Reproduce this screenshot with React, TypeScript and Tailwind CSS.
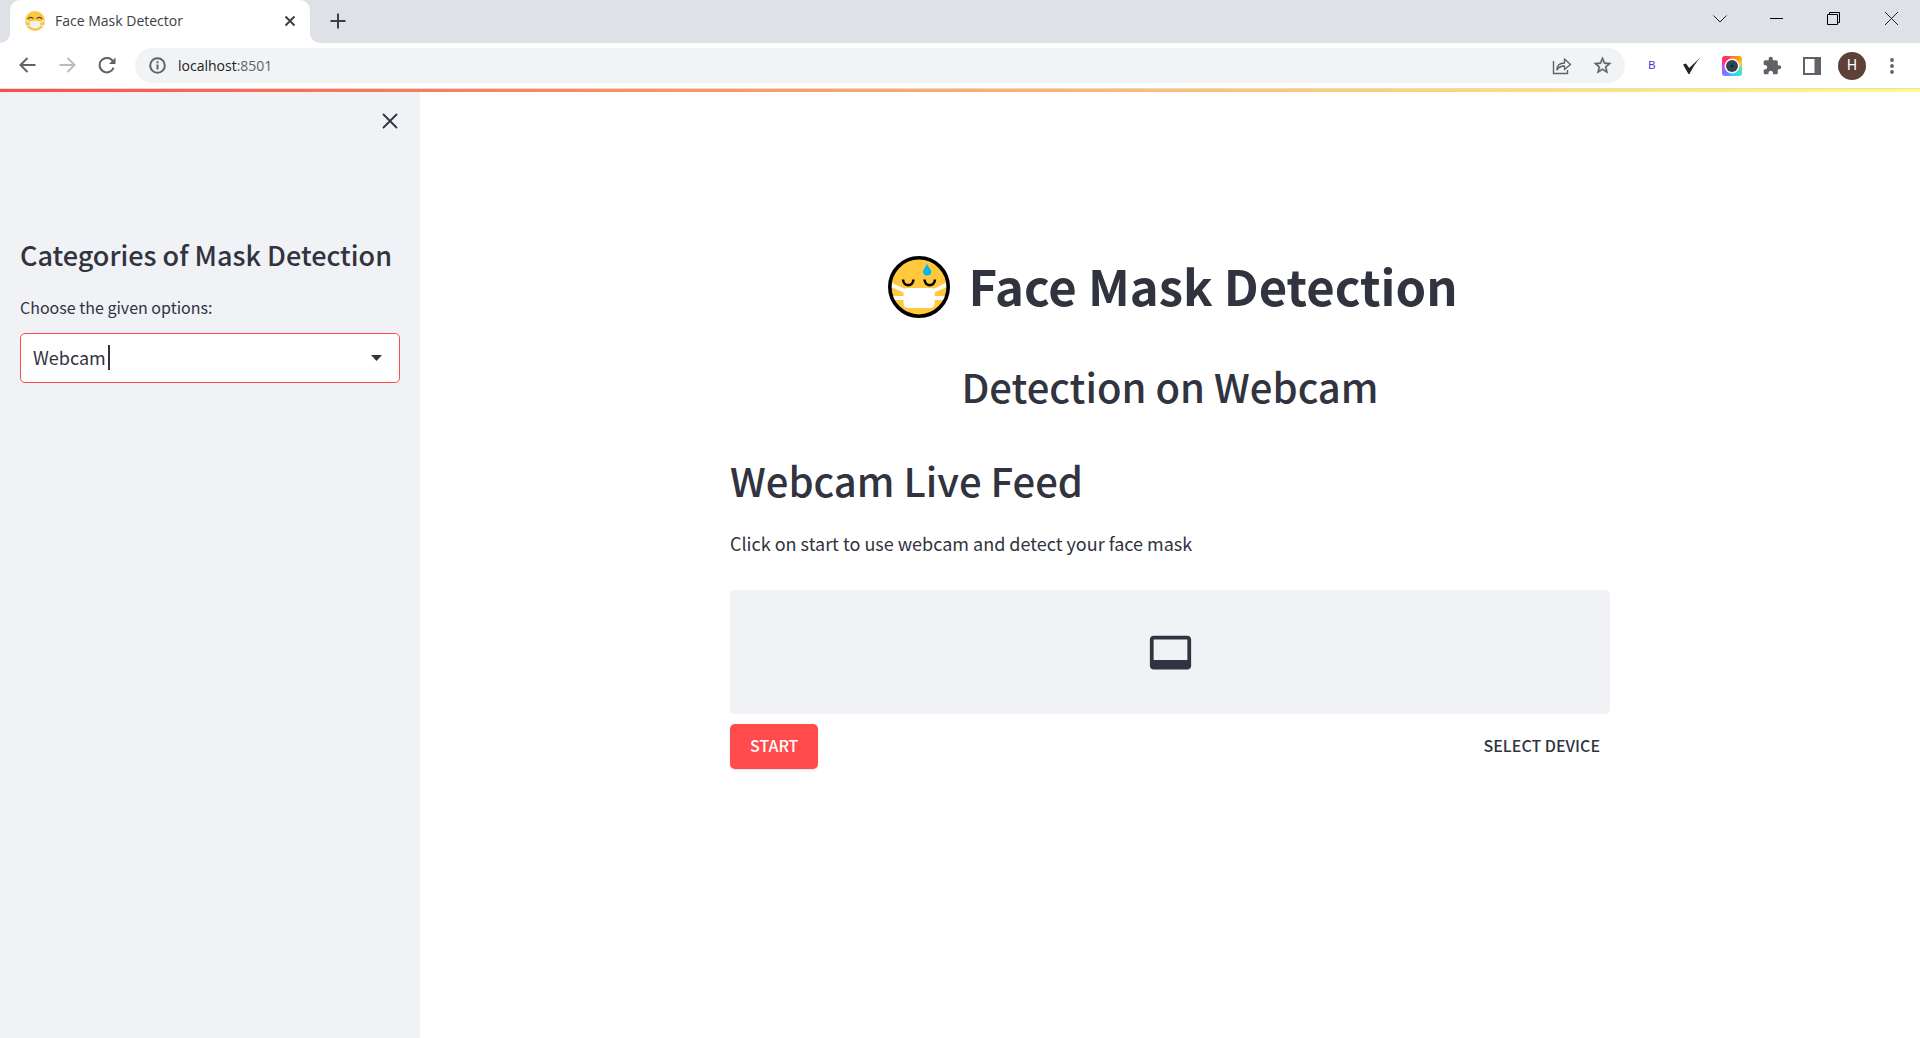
import React from "react";

const SOURCE = "font-['Noto_Sans_CJK_SC',sans-serif]";
const CHROME = "font-['Open_Sans','Noto_Sans',sans-serif]";

function MaskFavicon() {
  return (
    <svg width="20" height="20" viewBox="0 0 20 20" aria-hidden="true">
      <circle cx="10" cy="10" r="10" fill="#fcc740" />
      <path d="M3.2 7.6Q5.5 5.2 8 7.4M12 7.4Q14.500 5.200 16.800 7.600" fill="none" stroke="#5b4520" strokeWidth="1.200" strokeLinecap="round" />
      <path d="M0 9.500L5 11.500M20 9.500L15 11.500M1 15L5 14.500M19 15L15 14.500" stroke="#e9eef5" strokeWidth="1.200" />
      <path d="M5 10.500Q10 9 15 10.500V15.500Q10 19.500 5 15.500Z" fill="#eef2f8" />
    </svg>
  );
}

function MaskEmoji() {
  return (
    <svg className="shrink-0" width="62" height="62" viewBox="0 0 62 62" role="img" aria-label="Face with mask">
      <defs>
        <clipPath id="face">
          <circle cx="31" cy="31" r="28" />
        </clipPath>
      </defs>
      <circle cx="31" cy="31" r="29" fill="#ffc83d" />
      <g clipPath="url(#face)" fill="#fff">
        <path d="M2 26L17 33V37L2 30.500ZM60 26L45 33V37L60 30.500ZM2 40H17V44H2ZM60 40H45V44H60Z" />
        <path d="M19 32H43Q47 32 46.700 36V47Q46.700 52 42 52H20Q15.500 52 15.500 47V36Q15.500 32 19 32Z" />
      </g>
      <path d="M15 23.500C15.500 31 25 31 25.500 23.500M36.500 23.500C37 31 46.500 31 47 23.500" fill="none" stroke="#000" strokeWidth="2.600" />
      <path d="M39 7.500C40 11 43.300 13 43.300 16A4.200 4.200 0 0 1 35 16C35 13 38 11 39 7.500Z" fill="#00b8f1" />
      <circle cx="31" cy="31" r="29.200" fill="none" stroke="#000" strokeWidth="3.600" />
    </svg>
  );
}

function TabStrip() {
  return (
    <div className="flex h-[43px] items-stretch bg-[#dee1e6]">
      <div className="flex w-[10px] bg-white">
        <div className="w-full rounded-br-[10px] bg-[#dee1e6]" />
      </div>
      <div className="flex bg-[#dee1e6]">
        <div className="flex w-[300px] items-center rounded-t-[10px] bg-white pr-[10px] pb-px pl-[15px]">
          <MaskFavicon />
          <span className="ml-[10px] flex-1 text-[14px] leading-5 text-[#3c4043]">Face Mask Detector</span>
          <button aria-label="Close tab" className="flex size-5 items-center justify-center">
            <svg width="12" height="12" viewBox="0 0 12 12" stroke="#3c4043" strokeWidth="2"><path d="M1.500 1.500L10.500 10.500M10.500 1.500L1.500 10.500" /></svg>
          </button>
        </div>
      </div>
      <div className="flex w-[10px] bg-white">
        <div className="w-full rounded-bl-[10px] bg-[#dee1e6]" />
      </div>
      <button aria-label="New tab" className="flex w-[35px] items-center justify-center pb-px">
        <svg width="16" height="16" viewBox="0 0 16 16" stroke="#3c4043" strokeWidth="2"><path d="M8 0.500V15.500M0.500 8H15.500" /></svg>
      </button>
      <div className="flex-1" />
      <div className="flex h-[37px]">
        <button aria-label="Search tabs" className="flex w-[57px] items-center justify-center">
          <svg width="14" height="8" viewBox="0 0 14 8" fill="none" stroke="#222"><path d="M0.500 0.500L7 7L13.500 0.500" /></svg>
        </button>
        <button aria-label="Minimize" className="flex w-[57px] items-center justify-center">
          <svg width="13" height="13" viewBox="0 0 13 13" fill="none" stroke="#000"><path d="M0 6.500H13" /></svg>
        </button>
        <button aria-label="Restore" className="flex w-[57px] items-center justify-center">
          <svg width="13" height="13" viewBox="0 0 13 13" fill="none" stroke="#000"><path d="M0.500 2.500H10.500V12.500H0.500ZM2.500 2.500V0.500H12.500V10.500H10.500" /></svg>
        </button>
        <button aria-label="Close" className="flex w-[58px] items-center justify-center">
          <svg width="13" height="13" viewBox="0 0 13 13" fill="none" stroke="#222"><path d="M0 0L13 13M13 0L0 13" /></svg>
        </button>
      </div>
    </div>
  );
}

const iconButton = "flex w-10 shrink-0 items-center justify-center";

function Toolbar() {
  return (
    <div className="flex h-[46px] items-center border-b border-[#dadce0] bg-white pr-2 pl-[7px]">
      <button aria-label="Back" className={iconButton}>
        <svg width="17" height="18" viewBox="0 0 17 18" fill="none" stroke="#5f6368" strokeWidth="2"><path d="M16.500 8H2M8.500 1L1.500 8L8.500 15" /></svg>
      </button>
      <button aria-label="Forward" className={iconButton}>
        <svg width="17" height="18" viewBox="0 0 17 18" fill="none" stroke="#babcbe" strokeWidth="2"><path d="M0.500 8H15M8.500 1L15.500 8L8.500 15" /></svg>
      </button>
      <button aria-label="Reload" className={iconButton}>
        <svg width="18" height="18" viewBox="0 0 18 18"><path d="M15.200 4.800A7.200 7.200 0 1 0 15.600 10.600" fill="none" stroke="#5f6368" strokeWidth="2" /><path d="M17.500 0.500V7H11Z" fill="#5f6368" /></svg>
      </button>
      <div className="ml-[8px] flex h-[35px] flex-1 items-center rounded-full bg-[#f1f3f4] pr-[3px] pl-[14px]">
        <svg width="17" height="17" viewBox="0 0 17 17" fill="none" stroke="#5f6368" strokeWidth="2"><circle cx="8.500" cy="8.500" r="7.300" /><path d="M8.500 7.500V12.500M8.500 4.300V6.300" /></svg>
        <a href="http://localhost:8501" className="ml-3 text-[14px] leading-5 text-[#5f6368]">
          <span className="text-[#202124]">localhost</span>:8501
        </a>
        <div className="flex-1" />
        <button aria-label="Share" className={iconButton}>
          <svg width="20" height="20" viewBox="0 0 20 20" fill="none" stroke="#5f6368" strokeWidth="1.400"><path d="M1.500 5V17.500H15.500V14" /><path d="M5 14C5 9.500 7.500 7 12.500 7V3L18.500 8.500L12.500 13.500V10C9 10 6.500 11.200 5 14Z" strokeLinejoin="round" /></svg>
        </button>
        <button aria-label="Bookmark this page" className={iconButton}>
          <svg width="21" height="21" viewBox="0 0 24 24" fill="#5f6368" stroke="#5f6368" strokeWidth="0.400"><path d="M22 9.240l-7.190-.62L12 2 9.190 8.630 2 9.240l5.460 4.730L5.820 21 12 17.270 18.180 21l-1.630-7.030L22 9.240zM12 15.400l-3.760 2.270 1-4.280-3.320-2.880 4.380-.38L12 6.100l1.710 4.040 4.380.38-3.320 2.880 1 4.280L12 15.400z" /></svg>
        </button>
      </div>
      <div className="ml-[7px] flex items-center">
        <button aria-label="Extension B" className={iconButton + " font-['Liberation_Sans',sans-serif] text-[11px] text-[#3a34c8]"}>B</button>
        <button aria-label="Check extension" className={iconButton}>
          <svg width="20" height="18" viewBox="0 0 20 18" fill="#222"><path d="M1 7.500L4 6.500L7.200 11L18.800 0C14 5.500 10.500 10.500 7.500 17H6.500Z" /></svg>
        </button>
        <button aria-label="Camera extension" className={iconButton}>
          <span className="flex size-5 items-center justify-center rounded-[3px] bg-[conic-gradient(#ff7043,#ff9800,#ffc94f,#5fe0a0,#29e0f5,#35c8ff,#6d7dff,#b45cff,#ff2d95,#ff3050,#ff7043)]">
            <svg width="16" height="16" viewBox="0 0 16 16"><circle cx="8" cy="8" r="7.500" fill="#fff" /><circle cx="8" cy="8" r="6" fill="#37424a" /><circle cx="8" cy="8" r="3" fill="#1d4a62" /><circle cx="8" cy="8" r="1.200" fill="#101820" /></svg>
          </span>
        </button>
        <button aria-label="Extensions" className={iconButton}>
          <svg width="20" height="20" viewBox="0 0 24 24" fill="#5f6368"><path d="M20.500 11H19V7c0-1.100-.9-2-2-2h-4V3.500C13 2.120 11.880 1 10.500 1S8 2.120 8 3.500V5H4c-1.100 0-1.990.9-1.990 2v3.800H3.500c1.490 0 2.700 1.210 2.700 2.700s-1.210 2.700-2.700 2.700H2V20c0 1.100.9 2 2 2h3.800v-1.500c0-1.490 1.210-2.700 2.700-2.700 1.490 0 2.700 1.210 2.700 2.700V22H17c1.100 0 2-.9 2-2v-4h1.500c1.380 0 2.500-1.120 2.500-2.500S21.880 11 20.500 11z" /></svg>
        </button>
        <button aria-label="Side panel" className={iconButton}>
          <svg width="18" height="18" viewBox="0 0 18 18"><path d="M0 0H18V18H0ZM2 2V16H11.500V2Z" fill="#5f6368" fillRule="evenodd" /></svg>
        </button>
        <button aria-label="Profile" className={iconButton}>
          <span className="flex size-7 items-center justify-center rounded-full bg-[#5d4037] font-['Roboto',sans-serif] text-[14px] text-white">H</span>
        </button>
        <button aria-label="Menu" className={iconButton}>
          <svg width="4" height="16" viewBox="0 0 4 16" fill="#5f6368"><circle cx="2" cy="2" r="1.900" /><circle cx="2" cy="8" r="1.900" /><circle cx="2" cy="14" r="1.900" /></svg>
        </button>
      </div>
    </div>
  );
}

function Sidebar() {
  return (
    <aside className="w-[420px] shrink-0 bg-[#f0f2f6] px-5">
      <div className="flex h-[58px] items-center justify-end">
        <button aria-label="Close sidebar" className="flex size-5 items-center justify-center">
          <svg width="16" height="16" viewBox="0 0 16 16" stroke="#31333f" strokeWidth="1.800" strokeLinecap="round"><path d="M1.500 1.500L14.500 14.500M14.500 1.500L1.500 14.500" /></svg>
        </button>
      </div>
      <h2 className="mt-[87px] text-[27px] leading-[36px] font-medium whitespace-nowrap">Categories of Mask Detection</h2>
      <label htmlFor="mode" className="mt-[22px] block text-[16px] leading-[24px] font-normal">Choose the given options:</label>
      <div className="relative mt-[14px]">
        <select id="mode" defaultValue="Webcam" className="block h-[50px] w-full appearance-none rounded-[5px] border border-[#ff4b4b] bg-white px-3 pb-[2px] text-[18px] font-normal outline-none">
          <option>Webcam</option>
          <option>Image</option>
        </select>
        <span className="pointer-events-none absolute top-3 left-[88px] h-[25px] w-[2px] bg-[#31333f]" />
        <svg className="pointer-events-none absolute top-[22px] right-[18px]" width="11" height="6" viewBox="0 0 11 6" fill="#31333f"><path d="M0 0H11L5.500 6Z" /></svg>
      </div>
    </aside>
  );
}

function Content() {
  return (
    <main className="flex-1 overflow-hidden px-5">
      <div className="mx-auto max-w-[880px]">
        <h1 className="flex items-start justify-center gap-[18px] pt-[164px] pl-[6px] text-[49px] leading-[58px] font-bold whitespace-nowrap">
          <MaskEmoji />
          Face Mask Detection
        </h1>
        <h2 className="mt-[41px] text-center text-[40px] leading-[54px] font-medium">Detection on Webcam</h2>
        <h2 className="mt-[40px] text-[40px] leading-[54px] font-medium">Webcam Live Feed</h2>
        <p className="mt-[20px] text-[18px] leading-[32px] font-normal">Click on start to use webcam and detect your face mask</p>
        <div className="mt-[31px] flex h-[124px] items-center justify-center rounded-[5px] bg-[#f0f2f6]">
          <svg width="45" height="45" viewBox="0 0 24 24" fill="#31333f"><path d="M21 3H3c-1.110 0-2 .89-2 2v14c0 1.100.89 2 2 2h18c1.100 0 2-.9 2-2V5c0-1.110-.9-2-2-2zm0 13H3V5h18v11z" /></svg>
        </div>
        <div className="mt-[10px] flex items-center justify-between">
          <button className="h-[45px] rounded-[5px] bg-[#ff4b4b] px-5 pb-[3px] text-[16px] font-medium text-white shadow">START</button>
          <button className="h-[45px] rounded-[5px] px-[10px] pb-[3px] text-[16px] font-medium">SELECT DEVICE</button>
        </div>
      </div>
    </main>
  );
}

export default function App() {
  return (
    <div className="flex min-h-screen flex-col bg-white">
      <header className={CHROME}>
        <TabStrip />
        <Toolbar />
        <div className="h-[3px] bg-linear-to-r from-[#ff4b4b] to-[#fffd80]" />
      </header>
      <div className={"flex flex-1 text-[#31333f] " + SOURCE}>
        <Sidebar />
        <Content />
      </div>
    </div>
  );
}
